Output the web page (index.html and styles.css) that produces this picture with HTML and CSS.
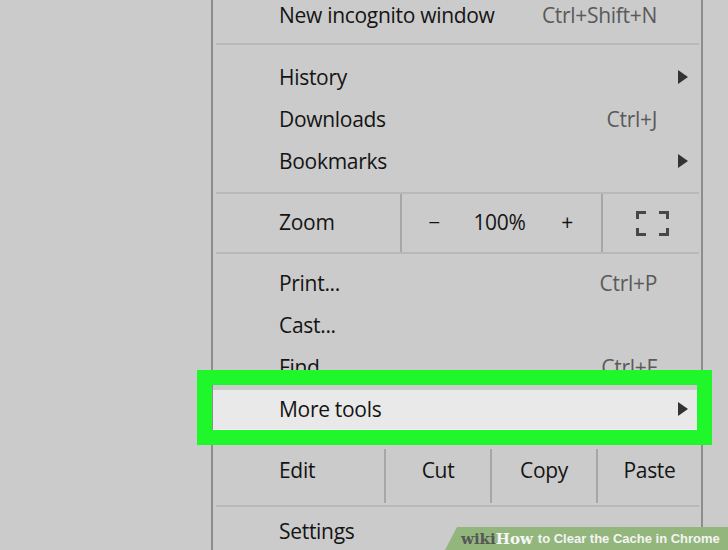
FILE: index.html
```html
<!DOCTYPE html>
<html lang="en">
  <head>
    <meta charset="UTF-8" />
    <meta name="viewport" content="width=device-width, initial-scale=1.0" />
    <title>How to Clear the Cache in Chrome</title>
    <link rel="stylesheet" href="styles.css">
  </head>
  <body>
    <div class="menu">
      <div class="item item-first">
        <span class="label">New incognito window</span>
        <span class="shortcut">Ctrl+Shift+N</span>
        <span class="arrow-slot"></span>
      </div>
      <div class="sep sep-top"></div>

      <div class="item">
        <span class="label">History</span>
        <span class="arrow-slot"><span class="arrow"></span></span>
      </div>
      <div class="item">
        <span class="label">Downloads</span>
        <span class="shortcut">Ctrl+J</span>
        <span class="arrow-slot"></span>
      </div>
      <div class="item">
        <span class="label">Bookmarks</span>
        <span class="arrow-slot"><span class="arrow"></span></span>
      </div>
      <div class="sep sep-mid"></div>

      <div class="zoom-row">
        <span class="zoom-label">Zoom</span>
        <div class="zoom-controls">
          <span>&minus;</span>
          <span>100%</span>
          <span>+</span>
        </div>
        <div class="zoom-full">
          <svg width="33" height="25" viewBox="0 0 33 25">
            <path d="M1.5 8V1.5H10M23 1.5H31.5V8M1.5 17V23.5H10M23 23.5H31.5V17" fill="none" stroke="#474747" stroke-width="3" />
          </svg>
        </div>
      </div>
      <div class="sep sep-zoom"></div>

      <div class="item">
        <span class="label">Print...</span>
        <span class="shortcut">Ctrl+P</span>
        <span class="arrow-slot"></span>
      </div>
      <div class="item">
        <span class="label">Cast...</span>
        <span class="arrow-slot"></span>
      </div>
      <div class="item">
        <span class="label">Find...</span>
        <span class="shortcut">Ctrl+F</span>
        <span class="arrow-slot"></span>
      </div>
      <div class="item item-hover">
        <span class="label">More tools</span>
        <span class="arrow-slot"><span class="arrow"></span></span>
      </div>
      <div class="sep sep-tools"></div>

      <div class="edit-row">
        <span class="edit-label">Edit</span>
        <span class="edit-cell">Cut</span>
        <span class="edit-cell">Copy</span>
        <span class="edit-cell">Paste</span>
      </div>
      <div class="sep sep-edit"></div>

      <div class="item">
        <span class="label">Settings</span>
        <span class="arrow-slot"></span>
      </div>
    </div>

    <!-- green highlight drawn over the menu -->
    <div class="callout"></div>

    <div class="banner">
      <span class="wiki">wiki</span><span class="how">How</span>
      <span class="title">to Clear the Cache in Chrome</span>
    </div>
  </body>
</html>
```

FILE: styles.css
```css
html,
body {
  margin: 0;
  height: 100%;
  overflow: hidden;
}
body {
  background-color: #cbcbcb;
  font-family: "Open Sans", "Noto Sans", sans-serif;
  color: #141414;
  letter-spacing: -0.3px;
  position: relative;
}
.menu {
  margin-left: 211px;
  width: 488px;
  height: 100%;
  border-left: 2px solid #8d8d8d;
  border-right: 2px solid #8d8d8d;
}
.item {
  display: flex;
  align-items: center;
  height: 42px;
  padding-left: 66px;
  padding-right: 13px;
  padding-bottom: 4px;
  box-sizing: border-box;
  font-size: 21px;
}
.item-first {
  height: 34px;
}
.label {
  flex: 1;
}
.shortcut {
  color: #5a5a5a;
}
.arrow-slot {
  width: 31px;
  display: flex;
  justify-content: flex-end;
}
.arrow {
  width: 0;
  height: 0;
  border-top: 7px solid transparent;
  border-bottom: 7px solid transparent;
  border-left: 10px solid #333;
}
.item-hover {
  background-color: #e9e9e9;
  box-shadow: inset 0 -3px 0 #fafafa;
}
.sep {
  height: 2px;
  margin: 0 2px 0 3px;
  background-color: #b9b9b9;
}
.sep-top {
  margin-top: 9px;
  margin-bottom: 13px;
}
.sep-mid {
  margin-top: 8px;
}
.sep-zoom {
  margin-bottom: 10px;
}
.sep-tools {
  margin-top: 8px;
}
.sep-edit {
  margin-top: 1px;
  margin-bottom: 5px;
}
.zoom-row {
  display: flex;
  height: 58px;
  font-size: 21px;
}
.zoom-label {
  width: 121px;
  padding-left: 66px;
  padding-bottom: 3px;
  display: flex;
  align-items: center;
  border-right: 2px solid #a7a7a7;
}
.zoom-controls {
  width: 199px;
  display: grid;
  grid-template-columns: 64px 67px 68px;
  align-items: center;
  justify-items: center;
  padding-bottom: 3px;
  border-right: 2px solid #a7a7a7;
}
.zoom-full {
  flex: 1;
  display: flex;
  align-items: center;
  justify-content: center;
}
.edit-row {
  display: flex;
  height: 62px;
  font-size: 21px;
  align-items: center;
}
.edit-label {
  width: 105px;
  padding-left: 66px;
  align-self: stretch;
  display: flex;
  align-items: center;
  border-right: 2px solid #a7a7a7;
  margin: 7px 0 1px;
  padding-bottom: 13px;
}
.edit-cell {
  width: 104px;
  align-self: stretch;
  display: flex;
  align-items: center;
  justify-content: center;
  border-right: 2px solid #a7a7a7;
  margin: 7px 0 1px;
  padding-bottom: 13px;
}
.edit-cell:last-child {
  border-right: none;
  flex: 1;
}
.callout {
  position: absolute;
  left: 197px;
  top: 370px;
  width: 485px;
  height: 45px;
  border: 15px solid #1ff72a;
}
.banner {
  position: absolute;
  right: 0;
  bottom: 0;
  width: 283px;
  height: 23px;
  padding-left: 16px;
  box-sizing: border-box;
  background-color: #93b67d;
  clip-path: polygon(12px 0, 100% 0, 100% 100%, 0 100%);
  display: flex;
  align-items: center;
  white-space: nowrap;
  letter-spacing: 0;
}
.wiki {
  font-family: "DejaVu Serif", "Liberation Serif", serif;
  font-weight: bold;
  font-size: 15px;
  color: #575757;
}
.how {
  font-family: "DejaVu Serif", "Liberation Serif", serif;
  font-weight: bold;
  font-size: 15px;
  color: #f6f6f6;
  margin-right: 5px;
}
.title {
  font-family: "Liberation Sans", Arial, sans-serif;
  font-weight: bold;
  font-size: 13px;
  color: #f4f4f4;
}
```
